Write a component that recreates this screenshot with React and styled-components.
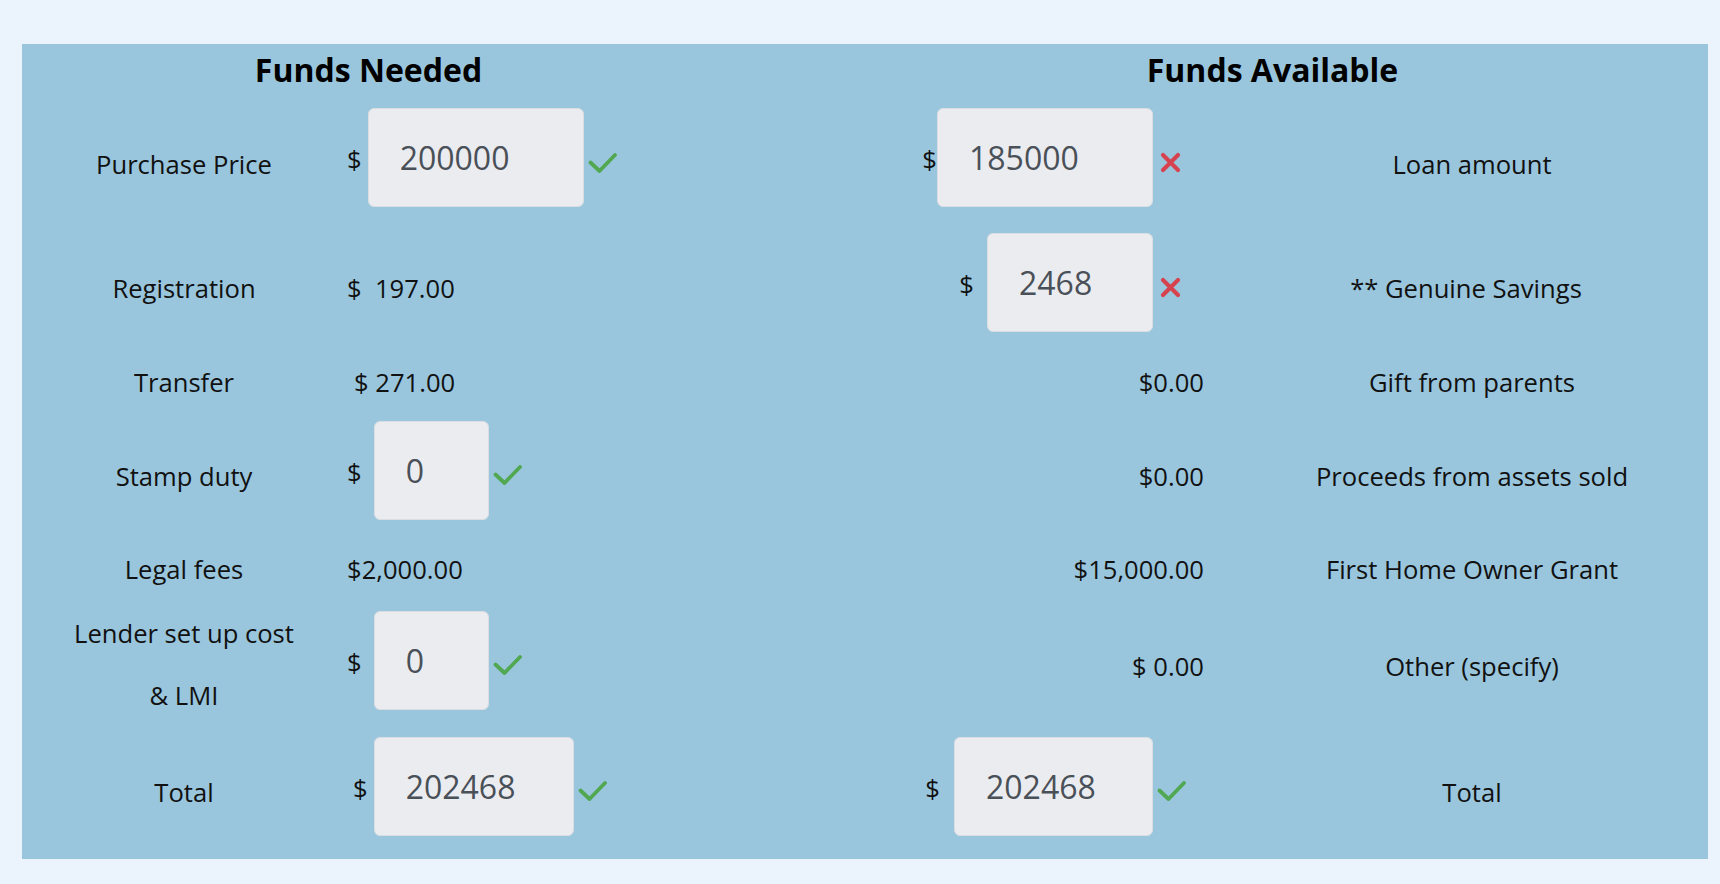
import React from "react";
import styled, { createGlobalStyle } from "styled-components";

const GlobalStyle = createGlobalStyle`
  html, body { margin: 0; padding: 0; background: #ebf3fc; }
  body { font-family: "Open Sans", "Liberation Sans", sans-serif; color: #111; }
  * { box-sizing: border-box; }
`;

const Page = styled.div`
  padding: 44px 12px 25px 22px;
  min-height: 884px;
`;

const Panel = styled.section`
  background: #99c6dd;
  padding: 0 10px 14px 0;
`;

const Row = styled.div`
  display: grid;
  grid-template-columns: 324px 369px 132px 399px 452px;
  height: ${(p) => p.$h}px;
`;

const Heading = styled.h2`
  margin: 0;
  grid-column: ${(p) => p.$span};
  align-self: center;
  text-align: center;
  font-size: 32px;
  line-height: 40px;
  font-weight: 700;
  color: #000;
`;

const Label = styled.div`
  grid-column: ${(p) => p.$col};
  display: flex;
  align-items: center;
  justify-content: center;
  text-align: center;
  font-size: 25.6px;
  line-height: ${(p) => p.$lh || 38}px;
  padding-top: ${(p) => p.$pt ?? 14}px;
  padding-right: ${(p) => p.$shift || 0}px;
  white-space: pre;
`;

const ValueCell = styled.div`
  grid-column: ${(p) => (p.$side === "left" ? 2 : 4)};
  display: flex;
  align-items: center;
  justify-content: ${(p) => (p.$side === "left" ? "flex-start" : "flex-end")};
  padding-left: ${(p) => (p.$side === "left" ? p.$inset : 0)}px;
  padding-right: ${(p) => (p.$side === "right" ? 42 : 0)}px;
`;

const Amount = styled.span`
  font-size: 25.6px;
  line-height: 38px;
  padding-top: 14px;
  white-space: pre;
`;

const Dollar = styled.span`
  font-size: 25.6px;
  line-height: 38px;
  padding-top: 5px;
  margin-right: ${(p) => p.$gap}px;
`;

const Field = styled.input`
  width: ${(p) => p.$w}px;
  height: 99px;
  flex: none;
  border: 1.5px solid #dadde2;
  border-radius: 6px;
  background: #eaecf0;
  color: #4a5058;
  font-family: "Open Sans", "Liberation Sans", sans-serif;
  font-size: 32px;
  padding: 0 0 0 31px;
  outline: none;
`;

const StatusSlot = styled.span`
  display: flex;
  align-items: center;
  width: ${(p) => (p.$w ? `${p.$w}px` : "auto")};
  padding-left: ${(p) => p.$gap}px;
  padding-top: 10px;
`;

const CheckIcon = () => (
  <svg width="29" height="20" viewBox="0 0 29 20" aria-hidden="true">
    <path
      d="M2.5 9.5 L11.5 18 L27 2"
      fill="none"
      stroke="#52a852"
      strokeWidth="3.8"
      strokeLinecap="round"
      strokeLinejoin="round"
    />
  </svg>
);

const CrossIcon = () => (
  <svg width="21" height="21" viewBox="0 0 21 21" aria-hidden="true">
    <path
      d="M3 3 L18 18 M18 3 L3 18"
      fill="none"
      stroke="#d6434f"
      strokeWidth="4.2"
      strokeLinecap="round"
    />
  </svg>
);

const Status = ({ kind, side }) => (
  <StatusSlot $w={side === "right" ? 51 : 0} $gap={kind === "ok" ? 4 : 7}>
    {kind === "ok" ? <CheckIcon /> : <CrossIcon />}
  </StatusSlot>
);

const Value = ({ side, v }) => {
  if (v.type === "text") {
    return (
      <ValueCell $side={side} $inset={v.inset ?? 1}>
        <Amount>{v.text}</Amount>
      </ValueCell>
    );
  }
  return (
    <ValueCell $side={side} $inset={v.inset ?? 1}>
      <Dollar $gap={v.gap}>$</Dollar>
      <Field $w={v.w} defaultValue={v.value} readOnly />
      <Status kind={v.status} side={side} />
    </ValueCell>
  );
};

const rows = [
  {
    h: 123,
    label: "Purchase Price",
    left: { type: "input", gap: 6, w: 216, value: "200000", status: "ok" },
    right: { type: "input", gap: 0, w: 216, value: "185000", status: "bad" },
    rlabel: "Loan amount",
  },
  {
    h: 126,
    label: "Registration",
    left: { type: "text", text: "$  197.00" },
    right: { type: "input", gap: 13, w: 166, value: "2468", status: "bad" },
    rlabel: "** Genuine Savings",
    rshift: 12,
  },
  {
    h: 62,
    label: "Transfer",
    left: { type: "text", text: "$ 271.00", inset: 8 },
    right: { type: "text", text: "$0.00" },
    rlabel: "Gift from parents",
  },
  {
    h: 126,
    label: "Stamp duty",
    left: { type: "input", gap: 12, w: 115, value: "0", status: "ok" },
    right: { type: "text", text: "$0.00" },
    rlabel: "Proceeds from assets sold",
  },
  {
    h: 60,
    label: "Legal fees",
    left: { type: "text", text: "$2,000.00" },
    right: { type: "text", text: "$15,000.00" },
    rlabel: "First Home Owner Grant",
  },
  {
    h: 134,
    label: "Lender set up cost\n& LMI",
    lh: 62,
    pt: 10,
    left: { type: "input", gap: 12, w: 115, value: "0", status: "ok" },
    right: { type: "text", text: "$ 0.00" },
    rlabel: "Other (specify)",
  },
  {
    h: 118,
    label: "Total",
    left: { type: "input", gap: 6, w: 200, value: "202468", status: "ok", inset: 7 },
    right: { type: "input", gap: 14, w: 199, value: "202468", status: "ok" },
    rlabel: "Total",
  },
];

export default function App() {
  return (
    <>
      <GlobalStyle />
      <Page>
        <Panel>
          <Row $h={52}>
            <Heading $span="1 / 3">Funds Needed</Heading>
            <Heading $span="4 / 6">Funds Available</Heading>
          </Row>
          {rows.map((r, i) => (
            <Row key={i} $h={r.h}>
              <Label $col={1} $lh={r.lh} $pt={r.pt}>
                {r.label}
              </Label>
              <Value side="left" v={r.left} />
              <Value side="right" v={r.right} />
              <Label $col={5} $shift={r.rshift}>
                {r.rlabel}
              </Label>
            </Row>
          ))}
        </Panel>
      </Page>
    </>
  );
}
